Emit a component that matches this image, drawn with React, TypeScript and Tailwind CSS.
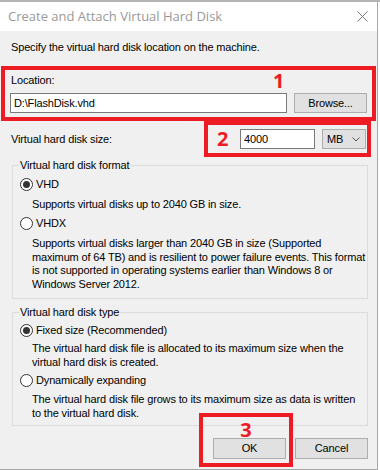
import React from 'react';

function Radio({ checked, label }: { checked?: boolean; label: string }) {
  return (
    <div className="flex items-center h-[13px] pl-[7px] gap-[3px]">
      <svg width="13" height="13" viewBox="0 0 13 13">
        <circle cx="6.5" cy="6.5" r="6" fill="#fff" stroke="#333" strokeWidth="1" />
        {checked && <circle cx="6.5" cy="6.5" r="3.5" fill="#333" />}
      </svg>
      <span className="leading-[13px]">{label}</span>
    </div>
  );
}

export default function App() {
  return (
    <div className="w-[380px] h-[470px] flex flex-col bg-white overflow-hidden font-['Liberation_Sans',Arial,sans-serif] text-[11px] tracking-[-0.15px] text-black">
      <div className="h-[2px] bg-[#b4b4b4]" />
      <div className="flex flex-1">
        <div className="w-[378px] flex flex-col border-r border-b border-[#a8a8a8]">
          {/* title bar */}
          <div className="h-[29px] bg-white flex items-center justify-between pl-[8px] pr-[9px]">
            <span className="font-['Open_Sans',sans-serif] text-[13px] tracking-normal text-[#999]">
              Create and Attach Virtual Hard Disk
            </span>
            <svg width="11" height="11" viewBox="0 0 11 11">
              <path d="M0.5 0.5 L10.5 10.5 M10.5 0.5 L0.5 10.5" stroke="#777" strokeWidth="1" />
            </svg>
          </div>

          <div className="flex-1 bg-[#f0f0f0] flex flex-col whitespace-nowrap">
            <p className="ml-[11px] mt-[10px] leading-[13px]">
              Specify the virtual hard disk location on the machine.
            </p>

            {/* box 1 */}
            <div className="relative ml-[1px] mt-[12px] w-[375px] h-[55px] border-4 border-[#ed1c24]">
              <p className="ml-[6px] mt-[4px] leading-[13px]">Location:</p>
              <div className="flex mt-[6px] ml-[5px]">
                <div className="w-[277px] h-[20px] border border-[#7a7a7a] bg-white px-[3px] leading-[18px]">
                  D:\FlashDisk.vhd
                </div>
                <button className="ml-[7px] w-[73px] h-[20px] border border-[#adadad] bg-[#e1e1e1] leading-[18px]">
                  Browse...
                </button>
              </div>
              <span className="absolute left-[268px] top-[1px] font-['Open_Sans',sans-serif] font-bold text-[20px] tracking-normal leading-none text-[#ed1c24]">
                1
              </span>
            </div>

            {/* size row */}
            <div className="flex items-center h-[36px]">
              <span className="ml-[11px] leading-[13px]">Virtual hard disk size:</span>
              <div className="ml-auto mr-[6px] w-[167px] h-[36px] border-4 border-[#ed1c24] flex items-center pl-[9px]">
                <span className="w-[13px] font-['Open_Sans',sans-serif] font-bold text-[20px] tracking-normal leading-none text-[#ed1c24]">
                  2
                </span>
                <div className="ml-[10px] w-[75px] h-[20px] border border-[#7a7a7a] bg-white px-[3px] leading-[18px]">
                  4000
                </div>
                <div className="ml-[7px] w-[44px] h-[20px] border border-[#adadad] bg-[#e1e1e1] flex items-center justify-between pl-[4px] pr-[5px]">
                  <span className="leading-[18px]">MB</span>
                  <svg width="8" height="5" viewBox="0 0 8 5">
                    <path d="M0.5 0.5 L4 4 L7.5 0.5" stroke="#555" strokeWidth="1" fill="none" />
                  </svg>
                </div>
              </div>
            </div>

            {/* format group */}
            <fieldset className="ml-[12px] mt-[2px] w-[356px] h-[140px] border border-[#dcdcdc] px-0">
              <legend className="ml-[6px] px-[1px] leading-[13px]">Virtual hard disk format</legend>
              <div className="mt-[6px]">
                <Radio checked label="VHD" />
              </div>
              <p className="ml-[19px] mt-[7px] leading-[13px]">
                Supports virtual disks up to 2040 GB in size.
              </p>
              <div className="mt-[6px]">
                <Radio label="VHDX" />
              </div>
              <p className="ml-[19px] mt-[7px] leading-[13.5px]">
                Supports virtual disks larger than 2040 GB in size (Supported
                <br />
                maximum of 64 TB) and is resilient to power failure events. This format
                <br />
                is not supported in operating systems earlier than Windows 8 or
                <br />
                Windows Server 2012.
              </p>
            </fieldset>

            {/* type group */}
            <fieldset className="ml-[12px] mt-[7px] w-[356px] h-[120px] border border-[#dcdcdc] px-0">
              <legend className="ml-[6px] px-[1px] leading-[13px]">Virtual hard disk type</legend>
              <div className="mt-[5px]">
                <Radio checked label="Fixed size (Recommended)" />
              </div>
              <p className="ml-[19px] mt-[5px] leading-[13.5px]">
                The virtual hard disk file is allocated to its maximum size when the
                <br />
                virtual hard disk is created.
              </p>
              <div className="mt-[5px]">
                <Radio label="Dynamically expanding" />
              </div>
              <p className="ml-[19px] mt-[6px] leading-[13.5px]">
                The virtual hard disk file grows to its maximum size as data is written
                <br />
                to the virtual hard disk.
              </p>
            </fieldset>

            {/* footer */}
            <div className="flex justify-end gap-[9px] pr-[9px] mt-[12px]">
              <div className="relative">
                <button className="w-[73px] h-[21px] border border-[#adadad] bg-[#e1e1e1] leading-[19px]">
                  OK
                </button>
                <div className="absolute -left-[14px] -top-[25px] w-[94px] h-[54px] border-4 border-[#ed1c24] flex justify-center">
                  <span className="mt-[3px] font-['Open_Sans',sans-serif] font-bold text-[20px] tracking-normal leading-none text-[#ed1c24]">
                    3
                  </span>
                </div>
              </div>
              <button className="w-[73px] h-[21px] border border-[#adadad] bg-[#e1e1e1] leading-[19px]">
                Cancel
              </button>
            </div>
          </div>
        </div>
        <div className="w-[2px] bg-white" />
      </div>
    </div>
  );
}
